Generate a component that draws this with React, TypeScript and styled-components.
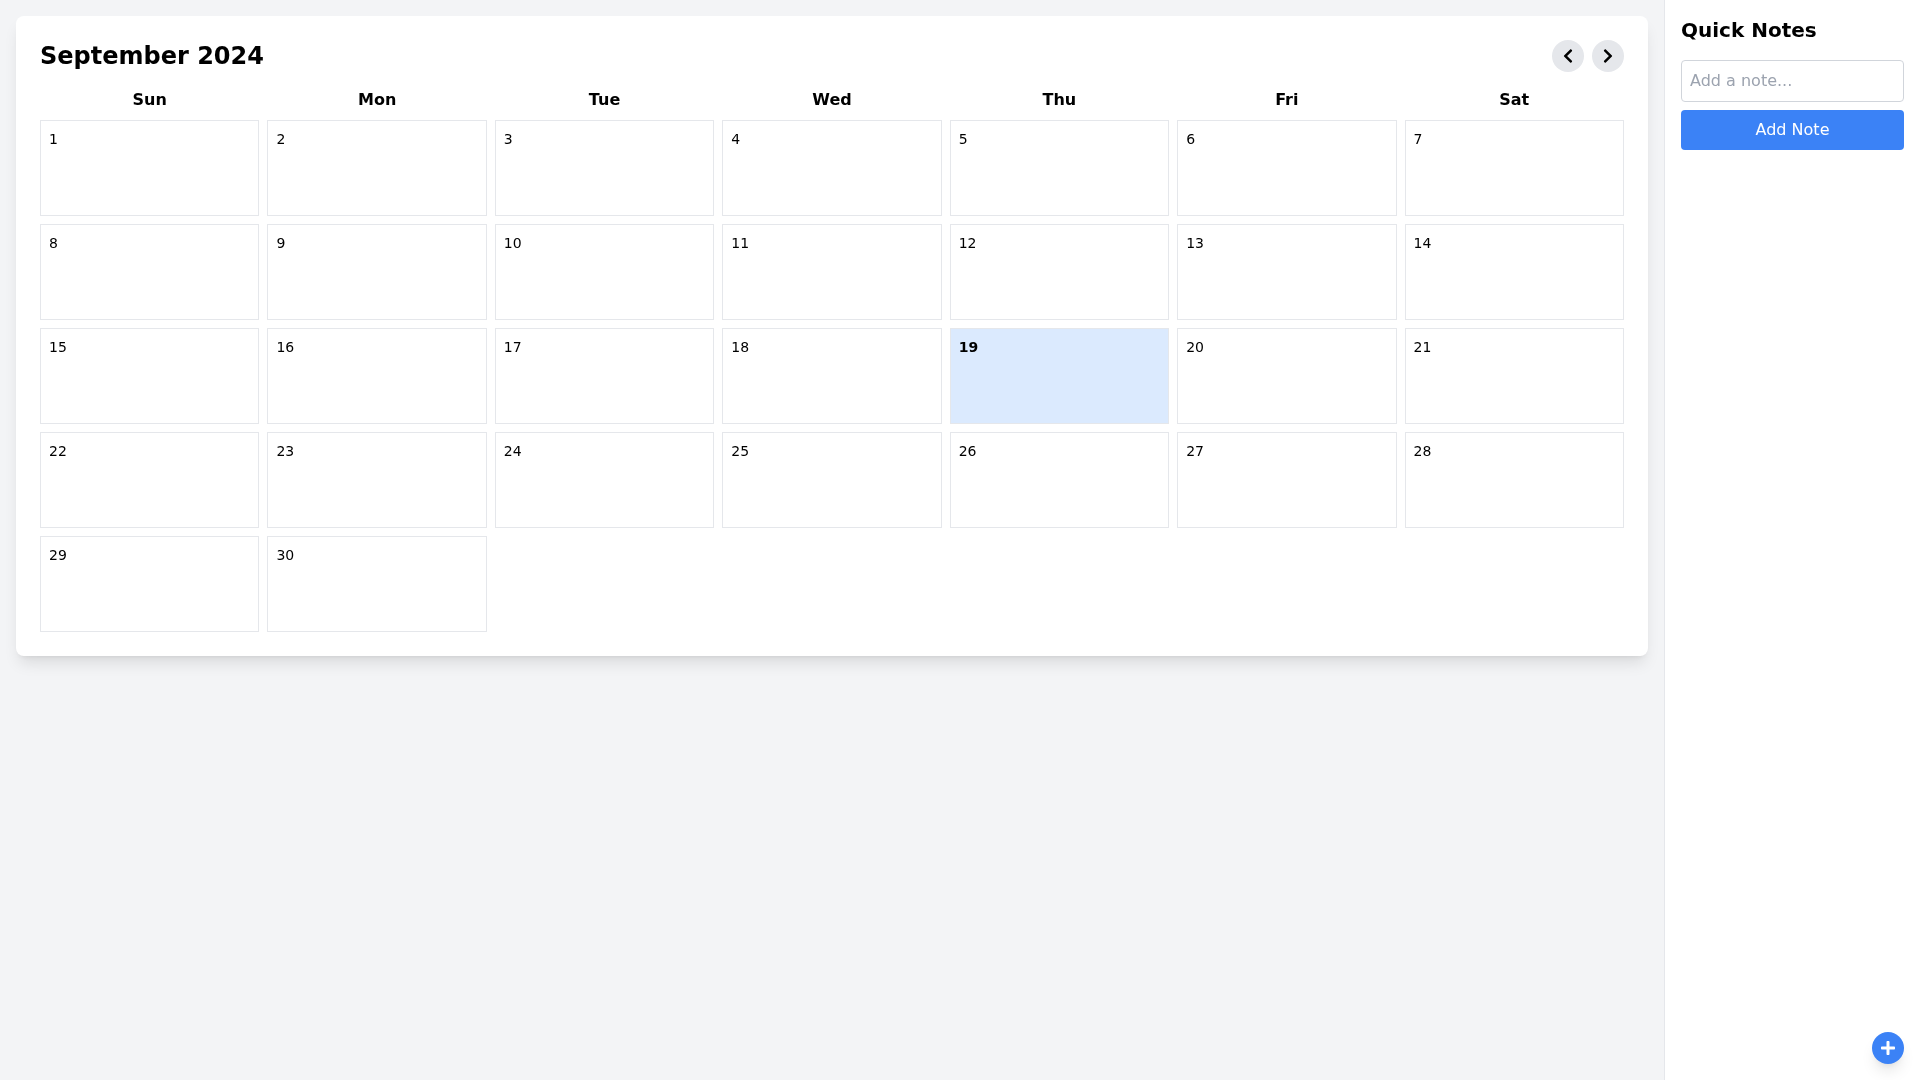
import styled, { createGlobalStyle } from "styled-components";
import { FaChevronLeft, FaChevronRight, FaPlus } from "react-icons/fa";

const colors = {
    page: "#f3f4f6",
    white: "#ffffff",
    line: "#e5e7eb",
    inputLine: "#d1d5db",
    placeholder: "#9ca3af",
    text: "#000000",
    primary: "#3b82f6",
    today: "#dbeafe",
};

const cardShadow =
    "0 10px 15px -3px rgba(0, 0, 0, 0.1), 0 4px 6px -4px rgba(0, 0, 0, 0.1)";

const GlobalStyle = createGlobalStyle`
    * {
        box-sizing: border-box;
    }

    body {
        margin: 0;
        font-family: "DejaVu Sans", sans-serif;
        color: ${colors.text};
        background-color: ${colors.page};
    }
`;

const Layout = styled.div`
    display: flex;
    height: 100vh;
    overflow: hidden;
    will-change: transform;
`;

const Main = styled.main`
    flex: 1;
    min-width: 0;
    padding: 16px;
`;

const CalendarCard = styled.section`
    padding: 24px;
    background-color: ${colors.white};
    border-radius: 8px;
    box-shadow: ${cardShadow};
`;

const CalendarHeader = styled.header`
    display: flex;
    align-items: center;
    justify-content: space-between;
    margin-bottom: 16px;
`;

const Title = styled.h1`
    margin: 0;
    font-size: 24px;
    line-height: 32px;
    font-weight: 700;
`;

const NavGroup = styled.div`
    display: flex;
    gap: 8px;
`;

const NavButton = styled.button`
    display: flex;
    align-items: center;
    justify-content: center;
    width: 32px;
    height: 32px;
    padding: 0;
    border: none;
    border-radius: 50%;
    color: ${colors.text};
    background-color: ${colors.line};
    font-size: 16px;
    cursor: pointer;
`;

const Weekdays = styled.div`
    display: grid;
    grid-template-columns: repeat(7, 1fr);
    gap: 8px;
    margin-bottom: 8px;
`;

const Weekday = styled.div`
    font-size: 16px;
    line-height: 24px;
    font-weight: 700;
    text-align: center;
`;

const DayGrid = styled.div`
    display: grid;
    grid-template-columns: repeat(7, 1fr);
    gap: 8px;
`;

const DayCell = styled.div<{ $today?: boolean }>`
    height: 96px;
    padding: 8px;
    border: 1px solid ${colors.line};
    background-color: ${(p) => (p.$today ? colors.today : colors.white)};
    font-size: 14px;
    line-height: 20px;
    font-weight: ${(p) => (p.$today ? 700 : 400)};
`;

const Sidebar = styled.aside`
    position: relative;
    flex: none;
    width: 256px;
    padding: 16px;
    background-color: ${colors.white};
    border-left: 1px solid ${colors.line};
`;

const SidebarTitle = styled.h2`
    margin: 0 0 16px;
    font-size: 20px;
    line-height: 28px;
    font-weight: 700;
`;

const NoteInput = styled.input`
    display: block;
    width: 100%;
    height: 42px;
    margin-bottom: 8px;
    padding: 7px 8px 9px;
    border: 1px solid ${colors.inputLine};
    border-radius: 4px;
    font-family: inherit;
    font-size: 16px;
    line-height: 24px;
    outline: none;

    &::placeholder {
        color: ${colors.placeholder};
    }
`;

const AddNoteButton = styled.button`
    display: block;
    width: 100%;
    height: 40px;
    padding: 8px;
    border: none;
    border-radius: 4px;
    color: ${colors.white};
    background-color: ${colors.primary};
    font-family: inherit;
    font-size: 16px;
    line-height: 24px;
    cursor: pointer;
`;

const FloatingButton = styled.button`
    position: absolute;
    right: 16px;
    bottom: 16px;
    display: flex;
    align-items: center;
    justify-content: center;
    width: 32px;
    height: 32px;
    padding: 0;
    border: none;
    border-radius: 50%;
    color: ${colors.white};
    background-color: ${colors.primary};
    box-shadow: ${cardShadow};
    font-size: 16px;
    cursor: pointer;
`;

const weekdays = ["Sun", "Mon", "Tue", "Wed", "Thu", "Fri", "Sat"];
const days = Array.from({ length: 30 }, (_, i) => i + 1);

export default function App() {
    return (
        <>
            <GlobalStyle />
            <Layout>
                <Main>
                    <CalendarCard>
                        <CalendarHeader>
                            <Title>September 2024</Title>
                            <NavGroup>
                                <NavButton aria-label="Previous month">
                                    <FaChevronLeft />
                                </NavButton>
                                <NavButton aria-label="Next month">
                                    <FaChevronRight />
                                </NavButton>
                            </NavGroup>
                        </CalendarHeader>
                        <Weekdays>
                            {weekdays.map((day) => (
                                <Weekday key={day}>{day}</Weekday>
                            ))}
                        </Weekdays>
                        <DayGrid>
                            {days.map((day) => (
                                <DayCell key={day} $today={day === 19}>
                                    {day}
                                </DayCell>
                            ))}
                        </DayGrid>
                    </CalendarCard>
                </Main>
                <Sidebar>
                    <SidebarTitle>Quick Notes</SidebarTitle>
                    <NoteInput placeholder="Add a note..." />
                    <AddNoteButton>Add Note</AddNoteButton>
                    <FloatingButton aria-label="Add">
                        <FaPlus />
                    </FloatingButton>
                </Sidebar>
            </Layout>
        </>
    );
}
